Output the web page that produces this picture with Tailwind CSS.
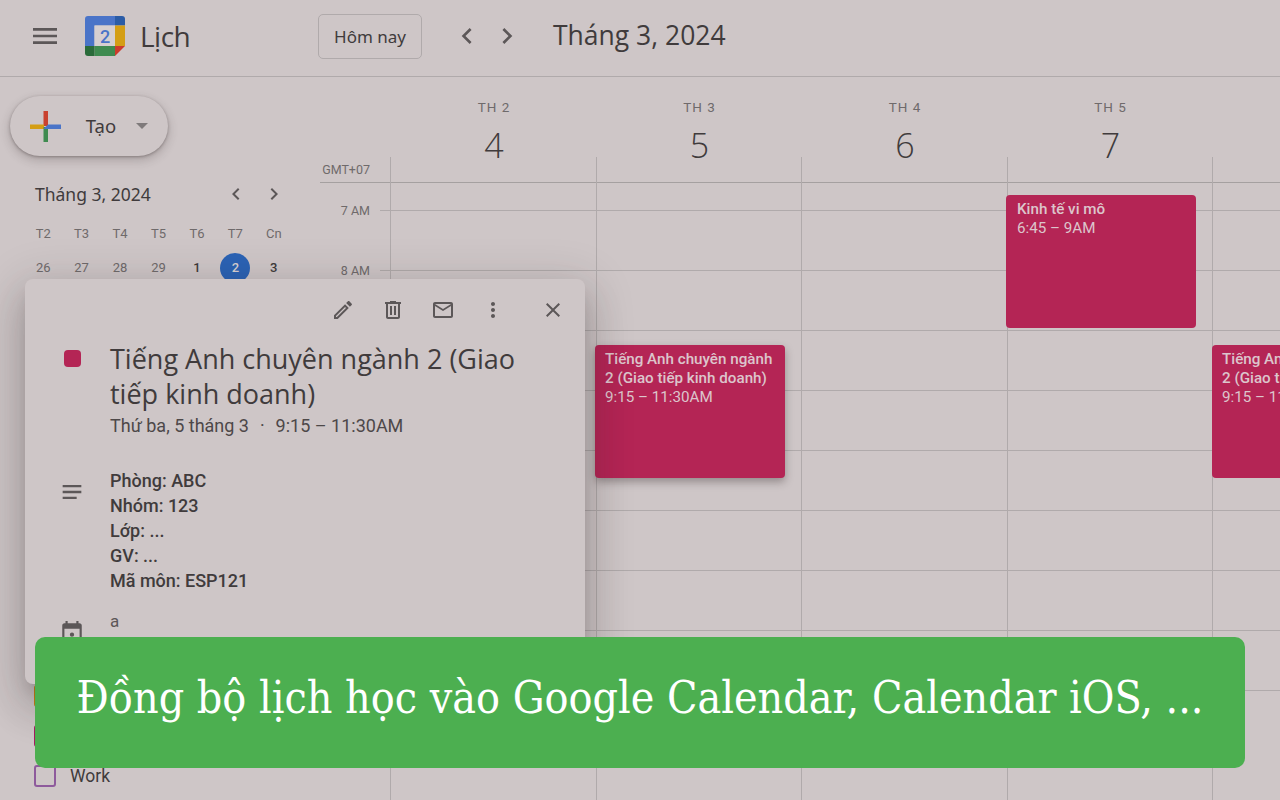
<!DOCTYPE html>
<html lang="vi">
  <head>
    <meta charset="UTF-8" />
    <meta name="viewport" content="width=device-width, initial-scale=1.0" />
    <title>Lịch</title>
    <script src="https://cdn.jsdelivr.net/npm/@tailwindcss/browser@4"></script>
  </head>
  <body class="m-0">
    <div class="relative w-[1280px] h-[800px] overflow-hidden bg-[#cec6c7] text-[#403b3c] font-['Roboto',sans-serif]">
      <!-- Top bar -->
      <header class="h-[77px] flex items-center pb-[4px] border-b border-[#b0aaab]">
        <svg class="ml-[29px] w-[32px] h-[32px] fill-[#5c5758]" viewBox="0 0 24 24"><path d="M3 18h18v-2H3v2zm0-5h18v-2H3v2zm0-7v2h18V6H3z"/></svg>
        <div class="relative ml-[24px] w-[40px] h-[40px]">
          <svg class="w-[40px] h-[40px]" viewBox="0 0 40 40">
            <path d="M3 0H30V9.500H9.500V30H0V3A3 3 0 0 1 3 0Z" fill="#4a74c8"/>
            <path d="M30 0H37A3 3 0 0 1 40 3V9.500H30Z" fill="#2b5ca6"/>
            <rect x="30" y="9.500" width="10" height="20.500" fill="#d49e15"/>
            <rect x="9.500" y="30" width="20.500" height="10" fill="#3f8b50"/>
            <path d="M0 30H9.500V40H3A3 3 0 0 1 0 37Z" fill="#2a6b3a"/>
            <path d="M30 30H40L30 40Z" fill="#cd3b2c"/>
            <rect x="9.500" y="9.500" width="20.500" height="20.500" fill="#d6cfd0"/>
          </svg>
          <span class="absolute inset-0 flex items-center justify-center text-[18px] font-medium text-[#4a74c8]">2</span>
        </div>
        <span class="ml-[15px] w-[50px] text-[28px] font-['Open_Sans',sans-serif] tracking-[-0.5px]">Lịch</span>
        <button class="ml-[128px] mt-[1px] w-[104px] h-[45px] rounded-[5px] border border-[#b0aaab] text-[17px] font-['Noto_Sans',sans-serif]">Hôm nay</button>
        <svg class="ml-[29px] w-[32px] h-[32px] fill-[#5c5758]" viewBox="0 0 24 24"><path d="M15.410 7.410L14 6l-6 6 6 6 1.410-1.410L10.830 12z"/></svg>
        <svg class="ml-[8px] w-[32px] h-[32px] fill-[#5c5758]" viewBox="0 0 24 24"><path d="M10 6L8.590 7.410 13.170 12l-4.580 4.590L10 18l6-6z"/></svg>
        <span class="ml-[30px] text-[26.500px] font-['Open_Sans',sans-serif]">Tháng 3, 2024</span>
      </header>

      <div class="flex h-[723px]">
        <!-- Sidebar -->
        <aside class="w-[320px] flex flex-col">
          <button class="mt-[19px] ml-[10px] w-[158px] h-[60px] rounded-full bg-[#cec6c7] flex items-center shadow-[0_1px_3px_rgba(60,50,50,0.4),0_4px_8px_2px_rgba(60,50,50,0.18)]">
            <svg class="ml-[20px] w-[31px] h-[31px]" viewBox="0 0 31 31">
              <rect x="13.500" y="0" width="4.500" height="15" fill="#c9412f"/>
              <rect x="0" y="13.500" width="14" height="4.500" fill="#d49e15"/>
              <rect x="13.500" y="16" width="4.500" height="15" fill="#3f8b50"/>
              <path d="M13.500 18L18 13.500H31V18Z" fill="#4a74c8"/>
            </svg>
            <span class="ml-[24px] w-[32px] text-[18.500px] font-['Noto_Sans',sans-serif]">Tạo</span>
            <span class="ml-[19px] w-0 h-0 border-x-[6px] border-x-transparent border-t-[6px] border-t-[#7f7a7b]"></span>
          </button>

          <div class="mt-[24px] ml-[35px] mr-[34px] flex items-center h-[28px]">
            <span class="text-[17.500px] font-['Noto_Sans',sans-serif]">Tháng 3, 2024</span>
            <svg class="ml-auto w-[24px] h-[24px] fill-[#5c5758]" viewBox="0 0 24 24"><path d="M15.410 7.410L14 6l-6 6 6 6 1.410-1.410L10.830 12z"/></svg>
            <svg class="ml-[14px] w-[24px] h-[24px] fill-[#5c5758]" viewBox="0 0 24 24"><path d="M10 6L8.590 7.410 13.170 12l-4.580 4.590L10 18l6-6z"/></svg>
          </div>

          <div class="mt-[9px] ml-[24px] w-[269px] grid grid-cols-7 text-[13px] text-center font-medium">
            <span class="h-[34px] leading-[34px] font-normal text-[#6f6a6b]">T2</span>
            <span class="h-[34px] leading-[34px] font-normal text-[#6f6a6b]">T3</span>
            <span class="h-[34px] leading-[34px] font-normal text-[#6f6a6b]">T4</span>
            <span class="h-[34px] leading-[34px] font-normal text-[#6f6a6b]">T5</span>
            <span class="h-[34px] leading-[34px] font-normal text-[#6f6a6b]">T6</span>
            <span class="h-[34px] leading-[34px] font-normal text-[#6f6a6b]">T7</span>
            <span class="h-[34px] leading-[34px] font-normal text-[#6f6a6b]">Cn</span>
            <span class="h-[34px] leading-[34px] font-normal text-[#6f6a6b]">26</span>
            <span class="h-[34px] leading-[34px] font-normal text-[#6f6a6b]">27</span>
            <span class="h-[34px] leading-[34px] font-normal text-[#6f6a6b]">28</span>
            <span class="h-[34px] leading-[34px] font-normal text-[#6f6a6b]">29</span>
            <span class="h-[34px] leading-[34px]">1</span>
            <span class="h-[34px] flex items-center justify-center"><span class="w-[30px] h-[30px] rounded-full bg-[#2b63b5] text-[#d9d2d3] leading-[30px]">2</span></span>
            <span class="h-[34px] leading-[34px]">3</span>
          </div>

          <!-- My calendars -->
          <div class="mt-auto ml-[34px] pb-[4px]">
            <div class="h-[40px] flex items-center"><span class="w-[22px] h-[22px] rounded-[3px] border-2 border-[#c67f17]"></span></div>
            <div class="h-[40px] flex items-center"><span class="w-[22px] h-[22px] rounded-[3px] border-2 border-[#a61e63]"></span></div>
            <div class="h-[40px] flex items-center">
              <span class="w-[22px] h-[22px] rounded-[3px] border-2 border-[#8e5a9c]"></span>
              <span class="ml-[14px] pt-[1px] text-[17.500px]">Work</span>
            </div>
          </div>
        </aside>

        <!-- Week view -->
        <main class="w-[960px] flex flex-col">
          <div class="h-[80px] flex pl-[71px] shrink-0">
            <div class="w-[206px] text-center"><p class="mt-[21px] text-[13.500px] tracking-[1px] text-[#6f6a6b] leading-[18px]">TH 2</p><p class="mt-[7px] text-[34px] font-['Open_Sans',sans-serif] font-light leading-[44px]">4</p></div>
            <div class="w-[205px] text-center"><p class="mt-[21px] text-[13.500px] tracking-[1px] text-[#6f6a6b] leading-[18px]">TH 3</p><p class="mt-[7px] text-[34px] font-['Open_Sans',sans-serif] font-light leading-[44px]">5</p></div>
            <div class="w-[206px] text-center"><p class="mt-[21px] text-[13.500px] tracking-[1px] text-[#6f6a6b] leading-[18px]">TH 4</p><p class="mt-[7px] text-[34px] font-['Open_Sans',sans-serif] font-light leading-[44px]">6</p></div>
            <div class="w-[205px] text-center"><p class="mt-[21px] text-[13.500px] tracking-[1px] text-[#6f6a6b] leading-[18px]">TH 5</p><p class="mt-[7px] text-[34px] font-['Open_Sans',sans-serif] font-light leading-[44px]">7</p></div>
          </div>

          <div class="relative flex-1 overflow-hidden">
            <!-- Hour rows -->
            <div class="h-[26px] flex border-b border-[#a5a0a0]">
              <span class="w-[50px] text-right text-[12.500px] text-[#6f6a6b] leading-[26px]">GMT+07</span>
              <span class="w-[20px]"></span>
            </div>
            <div class="h-[27px]"></div>
            <div class="h-[60px] flex"><span class="w-[50px] -mt-[8px] h-[18px] text-right text-[12.500px] leading-[18px] text-[#6f6a6b]">7 AM</span><span class="ml-[10px] flex-1 border-t border-[#b0aaab]"></span></div>
            <div class="h-[60px] flex"><span class="w-[50px] -mt-[8px] h-[18px] text-right text-[12.500px] leading-[18px] text-[#6f6a6b]">8 AM</span><span class="ml-[10px] flex-1 border-t border-[#b0aaab]"></span></div>
            <div class="h-[60px] flex"><span class="w-[60px]"></span><span class="flex-1 border-t border-[#b0aaab]"></span></div>
            <div class="h-[60px] flex"><span class="w-[60px]"></span><span class="flex-1 border-t border-[#b0aaab]"></span></div>
            <div class="h-[60px] flex"><span class="w-[60px]"></span><span class="flex-1 border-t border-[#b0aaab]"></span></div>
            <div class="h-[60px] flex"><span class="w-[60px]"></span><span class="flex-1 border-t border-[#b0aaab]"></span></div>
            <div class="h-[60px] flex"><span class="w-[60px]"></span><span class="flex-1 border-t border-[#b0aaab]"></span></div>
            <div class="h-[60px] flex"><span class="w-[60px]"></span><span class="flex-1 border-t border-[#b0aaab]"></span></div>
            <div class="h-[60px] flex"><span class="w-[60px]"></span><span class="flex-1 border-t border-[#b0aaab]"></span></div>

            <!-- Day columns over the rows -->
            <div class="absolute inset-y-0 left-[70px] right-0 flex">
              <div class="w-[206px] border-l border-[#b0aaab]"></div>
              <div class="relative w-[205px] border-l border-[#b0aaab]">
                <div class="absolute left-[-2px] top-[188px] w-[190px] h-[133px] rounded-[4px] bg-[#b42555] px-[10px] pt-[5px] text-[15.200px] leading-[19px] text-[#dcc5cc] shadow-[0_4px_8px_rgba(40,30,30,0.35)]">
                  <p class="font-medium">Tiếng Anh chuyên ngành 2 (Giao tiếp kinh doanh)</p>
                  <p>9:15 – 11:30AM</p>
                </div>
              </div>
              <div class="w-[206px] border-l border-[#b0aaab]"></div>
              <div class="relative w-[205px] border-l border-[#b0aaab]">
                <div class="absolute left-[-2px] top-[38px] w-[190px] h-[133px] rounded-[4px] bg-[#b42555] px-[11px] pt-[5px] text-[15.200px] leading-[19px] text-[#dcc5cc]">
                  <p class="font-medium">Kinh tế vi mô</p>
                  <p>6:45 – 9AM</p>
                </div>
              </div>
              <div class="relative flex-1 border-l border-[#b0aaab]">
                <div class="absolute left-[-1px] top-[188px] w-[190px] h-[133px] rounded-[4px] bg-[#b42555] px-[10px] pt-[5px] text-[15.200px] leading-[19px] text-[#dcc5cc]">
                  <p class="font-medium">Tiếng Anh chuyên ngành 2 (Giao tiếp kinh doanh)</p>
                  <p>9:15 – 11:30AM</p>
                </div>
              </div>
            </div>
          </div>
        </main>
      </div>

      <!-- Event popup -->
      <section class="absolute left-[25px] top-[279px] w-[560px] h-[405px] rounded-[8px] bg-[#cec6c7] shadow-[0_24px_38px_3px_rgba(40,30,30,0.16),0_9px_46px_8px_rgba(40,30,30,0.14),0_11px_15px_-7px_rgba(40,30,30,0.22)]">
        <div class="h-[62px] flex items-center fill-[#5c5758] pl-[306px]">
          <svg class="w-[24px] h-[24px]" viewBox="0 0 24 24"><path d="M14.060 9.020l.92.92L5.920 19H5v-.92l9.060-9.060M17.660 3c-.25 0-.51.1-.7.29l-1.830 1.830 3.750 3.750 1.830-1.830c.39-.39.39-1.020 0-1.410l-2.340-2.340c-.2-.2-.45-.29-.71-.29zm-3.600 3.190L3 17.250V21h3.750L17.810 9.940l-3.750-3.750z"/></svg>
          <svg class="ml-[26px] w-[24px] h-[24px]" viewBox="0 0 24 24"><path d="M15 4V3H9v1H4v2h1v13c0 1.100.9 2 2 2h10c1.100 0 2-.9 2-2V6h1V4h-5zm2 15H7V6h10v13zM9 8h2v9H9zm4 0h2v9h-2z"/></svg>
          <svg class="ml-[26px] w-[24px] h-[24px]" viewBox="0 0 24 24"><path d="M22 6c0-1.100-.9-2-2-2H4c-1.100 0-2 .9-2 2v12c0 1.100.9 2 2 2h16c1.100 0 2-.9 2-2V6zm-2 0l-8 5-8-5h16zm0 12H4V8l8 5 8-5v10z"/></svg>
          <svg class="ml-[26px] w-[24px] h-[24px]" viewBox="0 0 24 24"><path d="M12 8c1.100 0 2-.9 2-2s-.9-2-2-2-2 .9-2 2 .9 2 2 2zm0 2c-1.100 0-2 .9-2 2s.9 2 2 2 2-.9 2-2-.9-2-2-2zm0 6c-1.100 0-2 .9-2 2s.9 2 2 2 2-.9 2-2-.9-2-2-2z"/></svg>
          <svg class="ml-[36px] w-[24px] h-[24px]" viewBox="0 0 24 24"><path d="M19 6.410L17.590 5 12 10.590 6.410 5 5 6.410 10.590 12 5 17.590 6.410 19 12 13.410 17.590 19 19 17.590 13.410 12z"/></svg>
        </div>

        <div class="flex">
          <div class="w-[85px] shrink-0 pl-[39px] pt-[9px]"><div class="w-[17px] h-[17px] rounded-[4px] bg-[#b42555]"></div></div>
          <div class="w-[420px]">
            <h2 class="text-[27px] leading-[35px] font-['Open_Sans',sans-serif]">Tiếng Anh chuyên ngành 2 (Giao tiếp kinh doanh)</h2>
            <p class="mt-[2px] text-[18px] leading-[25px] text-[#4d4849]">Thứ ba, 5 tháng 3 <span class="mx-[6.500px]">·</span> 9:15 – 11:30AM</p>
          </div>
        </div>

        <div class="mt-[30px] flex">
          <div class="w-[85px] shrink-0 pl-[33px] pt-[10px]">
            <svg class="w-[28px] h-[28px] fill-[#5c5758]" viewBox="0 0 24 24"><path d="M4 18h12v-2H4v2zM4 6v2h16V6H4zm0 7h16v-2H4v2z"/></svg>
          </div>
          <div class="text-[18px] leading-[25px] font-medium">
            <p>Phòng: ABC</p>
            <p>Nhóm: 123</p>
            <p>Lớp: ...</p>
            <p>GV: ...</p>
            <p>Mã môn: ESP121</p>
          </div>
        </div>

        <div class="mt-[16px] flex">
          <div class="w-[85px] shrink-0 pl-[34px] pt-[11px]">
            <svg class="w-[26px] h-[26px] fill-[#5c5758]" viewBox="0 0 24 24"><path d="M19 3h-1V1h-2v2H8V1H6v2H5c-1.110 0-1.990.9-1.990 2L3 19c0 1.100.89 2 2 2h14c1.100 0 2-.9 2-2V5c0-1.100-.9-2-2-2zm0 16H5V8h14v11zM12 11.500a2 2 0 1 0 0 4 2 2 0 0 0 0-4z"/></svg>
          </div>
          <p class="text-[17px] leading-[25px] text-[#5c5758]">a</p>
        </div>
      </section>

      <!-- Promo banner -->
      <div class="absolute left-[35px] top-[637px] w-[1210px] h-[131px] rounded-[10px] bg-[#4caf50] flex items-center justify-center pb-[8px] text-white text-[44.300px] font-['DejaVu_Serif_Condensed','DejaVu_Serif',serif]">Đồng bộ lịch học vào Google Calendar, Calendar iOS, ...</div>
    </div>
  </body>
</html>
